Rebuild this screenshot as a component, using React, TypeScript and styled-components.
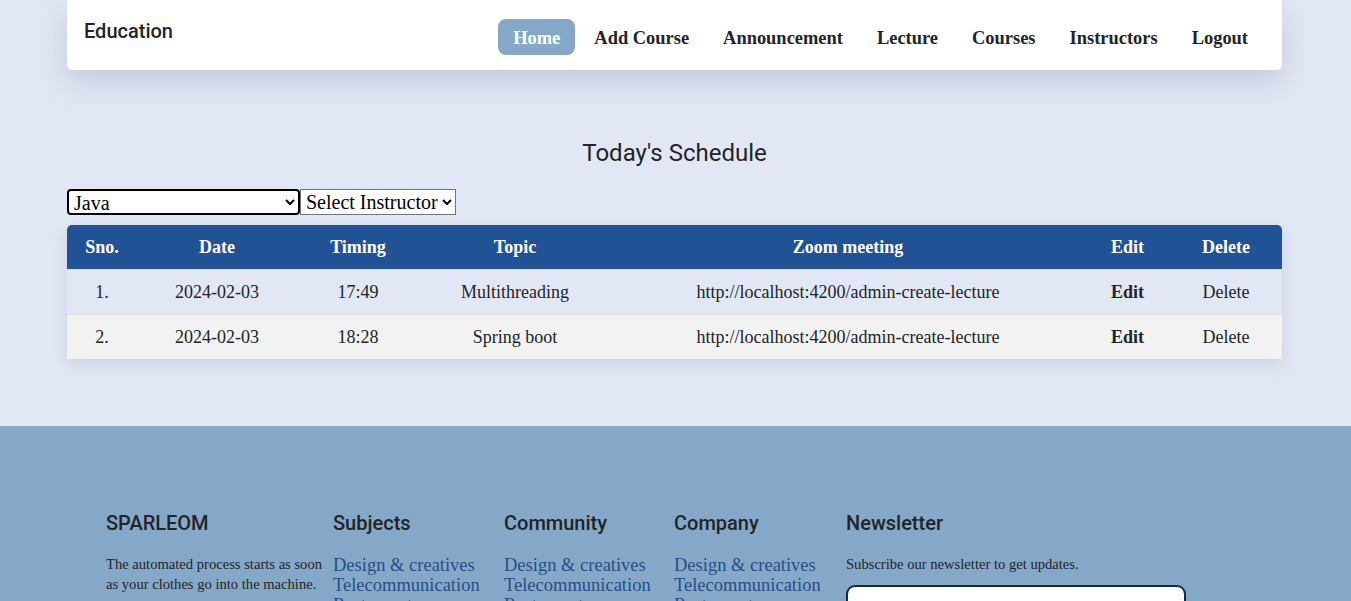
import React from "react";
import styled, { createGlobalStyle } from "styled-components";

const Global = createGlobalStyle`
  html, body { margin: 0; padding: 0; }
  body {
    background: #e2e7f5;
    font-family: "Liberation Serif", "Times New Roman", serif;
    color: #212529;
  }
  * { box-sizing: border-box; }
`;

const Page = styled.div`
  display: flex;
  flex-direction: column;
`;

const Main = styled.main`
  padding: 0 69px 0 67px;
  display: flex;
  flex-direction: column;
`;

const NavBar = styled.nav`
  background: #fff;
  height: 70px;
  border-radius: 0 0 5px 5px;
  box-shadow: 0 12px 30px rgba(40, 50, 90, 0.16);
  display: flex;
  justify-content: space-between;
  align-items: flex-start;
  padding: 0 17px;
`;

const Brand = styled.div`
  font-family: Roboto, "Noto Sans", sans-serif;
  font-weight: 500;
  font-size: 20px;
  line-height: 24px;
  color: #212529;
  padding-top: 19px;
`;

const NavList = styled.ul`
  list-style: none;
  margin: 0;
  padding: 19px 0 0;
  display: flex;
`;

const NavLink = styled.li<{ $active?: boolean }>`
  font-family: "Liberation Serif", "Times New Roman", serif;
  font-weight: bold;
  font-size: 18.45px;
  line-height: 20px;
  padding: 9px 15px 7px;
  margin: 0 2px;
  border-radius: 8px;
  color: ${(p) => (p.$active ? "#fff" : "#212529")};
  background: ${(p) => (p.$active ? "#86a8c8" : "transparent")};
`;

const Title = styled.h2`
  font-family: Roboto, "Noto Sans", sans-serif;
  font-weight: 400;
  font-size: 24px;
  line-height: 29px;
  text-align: center;
  margin: 69px 0 21px;
  color: #212529;
`;

const Filters = styled.div`
  display: flex;
  margin-bottom: 10px;
`;

const Select = styled.select<{ $focused?: boolean; $width?: number }>`
  font-family: "Liberation Serif", "Times New Roman", serif;
  font-size: 20px;
  height: 26px;
  padding: 0 1px 0 1px;
  background: #fff;
  color: #000;
  width: ${(p) => (p.$width ? `${p.$width}px` : "auto")};
  border: ${(p) => (p.$focused ? "2px solid #000" : "1px solid #767676")};
  border-radius: ${(p) => (p.$focused ? "4px" : "0")};
  outline: none;
`;

const Table = styled.table`
  width: 100%;
  border-collapse: collapse;
  box-shadow: 0 6px 16px rgba(40, 50, 90, 0.12);
  border-radius: 5px 5px 0 0;
  overflow: hidden;
  table-layout: fixed;
`;

const HeadRow = styled.tr`
  background: #215296;
`;

const Th = styled.th<{ $w: number }>`
  width: ${(p) => p.$w}px;
  color: #fff;
  font-size: 18px;
  font-weight: bold;
  line-height: 20px;
  padding: 12px 0;
  text-align: center;
`;

const Row = styled.tr<{ $alt?: boolean }>`
  background: ${(p) => (p.$alt ? "#f2f2f2" : "#e2e7f5")};
  border-top: 1px solid #dcdde2;
`;

const Td = styled.td<{ $bold?: boolean }>`
  font-size: 18px;
  line-height: 20px;
  padding: 12px 0;
  text-align: center;
  color: #212529;
  font-weight: ${(p) => (p.$bold ? "bold" : "normal")};
`;

const Footer = styled.footer`
  margin-top: 67px;
  background: #86a8c8;
  padding: 85px 0 40px 106px;
  display: flex;
`;

const FooterCol = styled.div<{ $w: number }>`
  width: ${(p) => p.$w}px;
  display: flex;
  flex-direction: column;
`;

const FooterHeading = styled.h5`
  font-family: Roboto, "Noto Sans", sans-serif;
  font-weight: 500;
  font-size: 20px;
  line-height: 24px;
  margin: 0 0 19px;
  color: #212529;
`;

const FooterText = styled.p`
  font-size: 14.6px;
  line-height: 20px;
  margin: 0;
  color: #212529;
`;

const FooterLinks = styled.ul`
  list-style: none;
  margin: 0;
  padding: 1px 0 0;
`;

const FooterLink = styled.li`
  font-size: 18.5px;
  line-height: 20px;
  color: #264f86;
`;

const EmailBox = styled.input`
  margin-top: 11px;
  width: 340px;
  height: 42px;
  border: 2px solid #0f2a4a;
  border-radius: 9px;
  background: #fff;
  outline: none;
`;

const links = ["Home", "Add Course", "Announcement", "Lecture", "Courses", "Instructors", "Logout"];
const cols: [string, number][] = [
  ["Sno.", 70],
  ["Date", 160],
  ["Timing", 122],
  ["Topic", 192],
  ["Zoom meeting", 474],
  ["Edit", 85],
  ["Delete", 112],
];
const rows = [
  ["1.", "2024-02-03", "17:49", "Multithreading"],
  ["2.", "2024-02-03", "18:28", "Spring boot"],
];
const linkItems = ["Design & creatives", "Telecommunication", "Restaurant", "Programming", "Architecture"];

export default function App() {
  return (
    <Page>
      <Global />
      <Main>
        <NavBar>
          <Brand>Education</Brand>
          <NavList>
            {links.map((l, i) => (
              <NavLink key={l} $active={i === 0}>
                {l}
              </NavLink>
            ))}
          </NavList>
        </NavBar>
        <Title>Today's Schedule</Title>
        <Filters>
          <Select $focused $width={233} defaultValue="Java">
            <option>Java</option>
          </Select>
          <Select defaultValue="Select Instructor">
            <option>Select Instructor</option>
          </Select>
        </Filters>
        <Table>
          <thead>
            <HeadRow>
              {cols.map(([c, w]) => (
                <Th key={c} $w={w}>
                  {c}
                </Th>
              ))}
            </HeadRow>
          </thead>
          <tbody>
            {rows.map((r, i) => (
              <Row key={r[0]} $alt={i === 1}>
                {r.map((c, j) => (
                  <Td key={j}>{c}</Td>
                ))}
                <Td>http://localhost:4200/admin-create-lecture</Td>
                <Td $bold>Edit</Td>
                <Td>Delete</Td>
              </Row>
            ))}
          </tbody>
        </Table>
      </Main>
      <Footer>
        <FooterCol $w={227}>
          <FooterHeading>SPARLEOM</FooterHeading>
          <FooterText>
            The automated process starts as soon
            <br />
            as your clothes go into the machine.
          </FooterText>
        </FooterCol>
        {[
          ["Subjects", 171],
          ["Community", 170],
          ["Company", 172],
        ].map(([h, w]) => (
          <FooterCol key={h as string} $w={w as number}>
            <FooterHeading>{h}</FooterHeading>
            <FooterLinks>
              {linkItems.map((l) => (
                <FooterLink key={l}>{l}</FooterLink>
              ))}
            </FooterLinks>
          </FooterCol>
        ))}
        <FooterCol $w={400}>
          <FooterHeading>Newsletter</FooterHeading>
          <FooterText>Subscribe our newsletter to get updates.</FooterText>
          <EmailBox type="email" />
        </FooterCol>
      </Footer>
    </Page>
  );
}
